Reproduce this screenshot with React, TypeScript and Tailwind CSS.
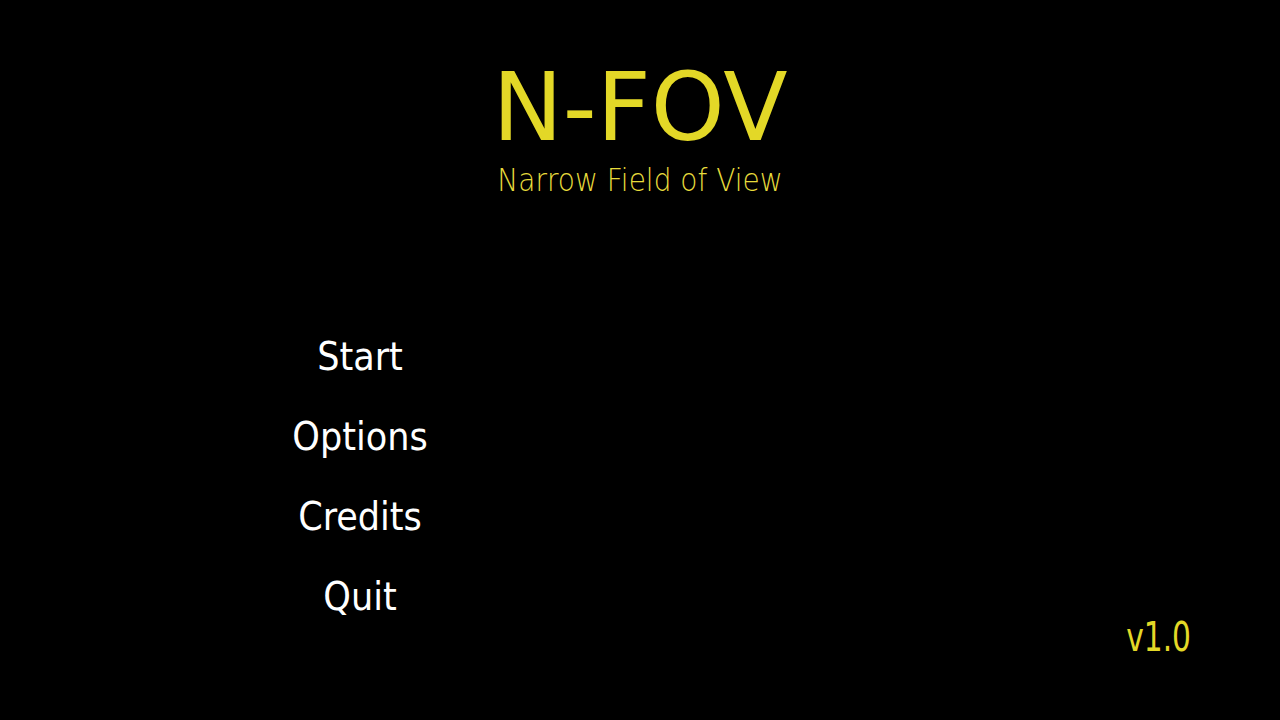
import React from "react";

export default function App() {
  const items = ["Start", "Options", "Credits", "Quit"];
  return (
    <div
      className="w-[1280px] h-[720px] bg-black flex flex-col overflow-hidden"
      style={{ fontFamily: '"DejaVu Sans", sans-serif' }}
    >
      <div className="flex flex-col items-center pt-[53px]">
        <div className="text-[#e3d827] text-[94px] leading-[110px]">N-FOV</div>
        <div className="text-[#e8dc3c] text-[28px] leading-[36px] font-extralight mt-[0px] scale-y-[1.15]">
          Narrow Field of View
        </div>
      </div>
      <div className="flex flex-row mt-[133px]">
        <div className="ml-[240px] w-[240px] flex flex-col items-center gap-[30px]">
          {items.map((t) => (
            <div
              key={t}
              className="text-white text-[39px] leading-[50px] font-stretch-condensed"
              style={{ fontFamily: '"DejaVu Sans Condensed", "DejaVu Sans", sans-serif' }}
            >
              {t}
            </div>
          ))}
        </div>
        <div className="flex-1 flex justify-end items-end pr-[89px]">
          <div
            className="text-[#e3d827] text-[33px] leading-[40px] -mb-[35px] font-stretch-condensed scale-y-[1.26]"
            style={{ fontFamily: '"DejaVu Sans Condensed", "DejaVu Sans", sans-serif' }}
          >
            v1.0
          </div>
        </div>
      </div>
    </div>
  );
}
